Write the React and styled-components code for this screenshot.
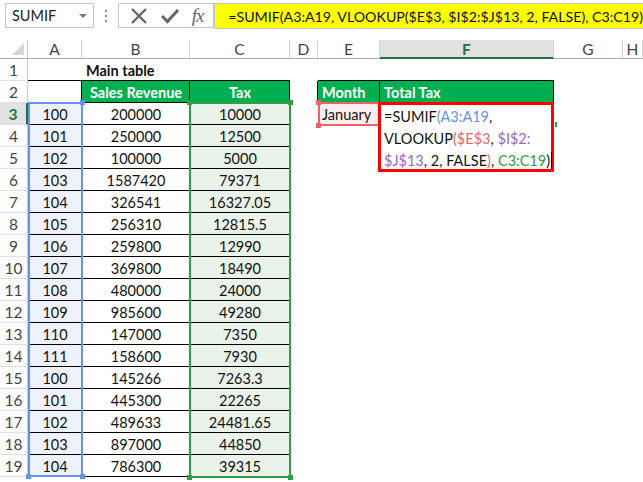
import React from "react";
import styled, { createGlobalStyle, css } from "styled-components";

const GlobalStyle = createGlobalStyle`
  body {
    margin: 0;
    background: #fff;
    overflow: hidden;
    font-family: Lato, "Liberation Sans", Arial, sans-serif;
  }
`;

const COLS = ["A", "B", "C", "D", "E", "F", "G", "H"];

const rows = [
  [100, 200000, 10000],
  [101, 250000, 12500],
  [102, 100000, 5000],
  [103, 1587420, 79371],
  [104, 326541, "16327.05"],
  [105, 256310, "12815.5"],
  [106, 259800, 12990],
  [107, 369800, 18490],
  [108, 480000, 24000],
  [109, 985600, 49280],
  [110, 147000, 7350],
  [111, 158600, 7930],
  [100, 145266, "7263.3"],
  [101, 445300, 22265],
  [102, 489633, "24481.65"],
  [103, 897000, 44850],
  [104, 786300, 39315],
];

const Page = styled.div`
  width: 643px;
  height: 482px;
  overflow: hidden;
`;

const Toolbar = styled.div`
  height: 40px;
  display: flex;
  align-items: flex-start;
  padding-top: 3px;
  box-sizing: border-box;
`;

const NameBox = styled.div`
  margin-left: 5px;
  width: 102px;
  height: 25px;
  box-sizing: border-box;
  border: 1px solid #c6c6c6;
  display: flex;
  align-items: center;
  justify-content: space-between;
  padding: 0 6px 0 6px;
  font-size: 14.5px;
  color: #222;
`;

const Caret = styled.span`
  width: 0;
  height: 0;
  border-left: 4px solid transparent;
  border-right: 4px solid transparent;
  border-top: 4px solid #777;
`;

const Dots = styled.div`
  width: 29px;
  height: 25px;
  display: flex;
  flex-direction: column;
  align-items: center;
  justify-content: center;
  gap: 3px;
  span {
    width: 2px;
    height: 2px;
    background: #888;
  }
`;

const FxButtons = styled.div`
  width: 111px;
  height: 25px;
  box-sizing: border-box;
  border: 1px solid #c6c6c6;
  display: flex;
  align-items: center;
  justify-content: space-around;
  padding: 0 4px;
`;

const FxText = styled.span`
  font-family: "Liberation Serif", "DejaVu Serif", serif;
  font-style: italic;
  font-size: 19px;
  color: #666;
  letter-spacing: -1px;
`;

const FormulaInput = styled.div`
  flex: 1;
  height: 26px;
  box-sizing: border-box;
  background: #ffff00;
  border: 1px solid #c6c6c6;
  border-right: none;
  padding-left: 13px;
  display: flex;
  align-items: center;
  font-size: 14.2px;
  color: #111;
  white-space: nowrap;
`;

const Sheet = styled.div`
  position: relative;
  display: grid;
  grid-template-columns: 28px 54px 108px 100px 28px 62px 174px 69px 1fr;
  grid-template-rows: 19px repeat(19, 22px);
`;

const Corner = styled.div`
  border-right: 1px solid #c8c8c8;
  border-bottom: 1px solid #ababab;
  box-sizing: border-box;
  display: flex;
  align-items: flex-end;
  justify-content: flex-end;
  padding: 0 3px 3px 0;
`;

const ColHead = styled.div`
  box-sizing: border-box;
  border-right: 1px solid #d4d4d4;
  border-bottom: 1px solid #ababab;
  display: flex;
  align-items: center;
  justify-content: center;
  font-size: 15.5px;
  color: #444;
  ${(p) =>
    p.$active &&
    css`
      background: #e1e1e1;
      border-bottom: 2px solid #217346;
      color: #217346;
      font-weight: 700;
    `}
`;

const RowHead = styled.div`
  box-sizing: border-box;
  border-right: 1px solid #c8c8c8;
  border-bottom: 1px solid #e1e1e1;
  display: flex;
  align-items: center;
  justify-content: center;
  font-size: 15.5px;
  color: #444;
  ${(p) =>
    p.$active &&
    css`
      background: #e1e1e1;
      border-right: 2px solid #217346;
      color: #217346;
      font-weight: 700;
    `}
`;

const Cell = styled.div`
  box-sizing: border-box;
  display: flex;
  align-items: center;
  justify-content: ${(p) => (p.$left ? "flex-start" : "center")};
  padding: ${(p) => (p.$left ? "0 4px" : "0")};
  font-size: 14.5px;
  color: #111;
  white-space: nowrap;
  background: ${(p) => p.$fill || "transparent"};
  font-weight: ${(p) => (p.$bold ? 700 : 400)};
  ${(p) => p.$head && css`color: #fff;`}
  box-shadow: ${(p) =>
    [p.$r && "inset -1px 0 0 #000", p.$b && "inset 0 -1px 0 #000"]
      .filter(Boolean)
      .join(", ") || "none"};
`;

const Ref = styled.div`
  position: absolute;
  box-sizing: border-box;
  border: 2px solid ${(p) => p.$color};
  pointer-events: none;
`;

const Handle = styled.span`
  position: absolute;
  width: 5px;
  height: 5px;
  background: ${(p) => p.$color};
  ${(p) => (p.$top ? "top: -4px;" : "bottom: -4px;")}
  ${(p) => (p.$leftSide ? "left: -4px;" : "right: -4px;")}
`;

const EditBox = styled.div`
  position: absolute;
  left: 378px;
  top: 62px;
  width: 176px;
  height: 70px;
  box-sizing: border-box;
  border: 3px solid #ff0000;
  background: #fff;
  padding: 1px 0 0 3px;
  font-size: 14.5px;
  line-height: 22px;
  color: #111;
  white-space: nowrap;
`;

const Tok = styled.span`
  color: ${(p) => p.$c || "#111"};
`;

const Caretline = styled.span`
  display: inline-block;
  width: 1px;
  height: 18px;
  background: #000;
  vertical-align: -4px;
  margin-left: 1px;
`;

const Tick = styled.div`
  position: absolute;
  left: 555px;
  top: 82px;
  width: 2px;
  height: 5px;
  background: #2e9e48;
`;

const BLUE = "#6692e8";
const GREEN = "#2f9e45";
const PINK = "#e8646c";
const PURPLE = "#9966cc";

const Handles = ({ color, corners }) =>
  corners.map((c) => (
    <Handle key={c} $color={color} $top={c[0] === "t"} $leftSide={c[1] === "l"} />
  ));

const XIcon = () => (
  <svg width="20" height="20" viewBox="0 0 20 20">
    <path d="M3 3 L17 17 M17 3 L3 17" stroke="#666" strokeWidth="2.4" fill="none" />
  </svg>
);

const CheckIcon = () => (
  <svg width="20" height="20" viewBox="0 0 20 20">
    <path d="M2 10 L7.5 15.5 L18 4" stroke="#666" strokeWidth="3" fill="none" />
  </svg>
);

const CornerTri = () => (
  <svg width="12" height="12" viewBox="0 0 12 12">
    <path d="M12 0 L12 12 L0 12 Z" fill="#d6d6d6" />
  </svg>
);

export default function App() {
  const sheetRows = [];

  // row 1
  sheetRows.push(
    <React.Fragment key="r1">
      <RowHead>1</RowHead>
      <Cell $b />
      <Cell $b $bold $left>Main table</Cell>
      <Cell $b />
      <Cell />
      <Cell $b />
      <Cell $b />
      <Cell />
      <Cell />
    </React.Fragment>
  );

  // row 2
  sheetRows.push(
    <React.Fragment key="r2">
      <RowHead>2</RowHead>
      <Cell $r $b />
      <Cell $r $b $fill="#00b050" $bold $head>Sales Revenue</Cell>
      <Cell $r $b $fill="#00b050" $bold $head>Tax</Cell>
      <Cell $r />
      <Cell $r $b $fill="#00b050" $bold $head $left>Month</Cell>
      <Cell $r $b $fill="#00b050" $bold $head $left>Total Tax</Cell>
      <Cell />
      <Cell />
    </React.Fragment>
  );

  rows.forEach((r, i) => {
    const n = i + 3;
    sheetRows.push(
      <React.Fragment key={n}>
        <RowHead $active={n === 3}>{n}</RowHead>
        <Cell $r $b $fill="#edf2fc">{r[0]}</Cell>
        <Cell $r $b>{r[1]}</Cell>
        <Cell $r $b $fill="#e9f3ea">{r[2]}</Cell>
        <Cell />
        {n === 3 ? <Cell $left $fill="#fdeeee">January</Cell> : <Cell />}
        <Cell />
        <Cell />
        <Cell />
      </React.Fragment>
    );
  });

  return (
    <Page>
      <GlobalStyle />
      <Toolbar>
        <NameBox>
          SUMIF
          <Caret />
        </NameBox>
        <Dots>
          <span />
          <span />
          <span />
        </Dots>
        <FxButtons>
          <XIcon />
          <CheckIcon />
          <FxText>fx</FxText>
        </FxButtons>
        <FormulaInput>=SUMIF(A3:A19, VLOOKUP($E$3, $I$2:$J$13, 2, FALSE), C3:C19)</FormulaInput>
      </Toolbar>

      <Sheet>
        <Corner>
          <CornerTri />
        </Corner>
        {COLS.map((c) => (
          <ColHead key={c} $active={c === "F"}>
            {c}
          </ColHead>
        ))}
        {sheetRows}

        <Ref $color={BLUE} style={{ left: 28, top: 62, width: 55, height: 375 }}>
          <Handles color={BLUE} corners={["tr", "bl", "br"]} />
        </Ref>
        <Ref $color={GREEN} style={{ left: 189, top: 62, width: 102, height: 376 }}>
          <Handles color={GREEN} corners={["tl", "tr", "bl", "br"]} />
        </Ref>
        <Ref $color={PINK} style={{ left: 318, top: 62, width: 64, height: 24 }}>
          <Handles color={PINK} corners={["tl", "bl"]} />
        </Ref>

        <EditBox>
          <Tok>=SUMIF</Tok>
          <Tok $c={BLUE}>(A3:A19</Tok>
          <Tok>,</Tok>
          <br />
          <Tok>VLOOKUP</Tok>
          <Tok $c={PINK}>($E$3</Tok>
          <Tok>, </Tok>
          <Tok $c={PURPLE}>$I$2:</Tok>
          <br />
          <Tok $c={PURPLE}>$J$13</Tok>
          <Tok>, 2, FALSE</Tok>
          <Tok $c={PINK}>)</Tok>
          <Tok>, </Tok>
          <Tok $c={GREEN}>C3:C19</Tok>
          <Tok>)</Tok>
          <Caretline />
        </EditBox>
        <Tick />
      </Sheet>
    </Page>
  );
}
